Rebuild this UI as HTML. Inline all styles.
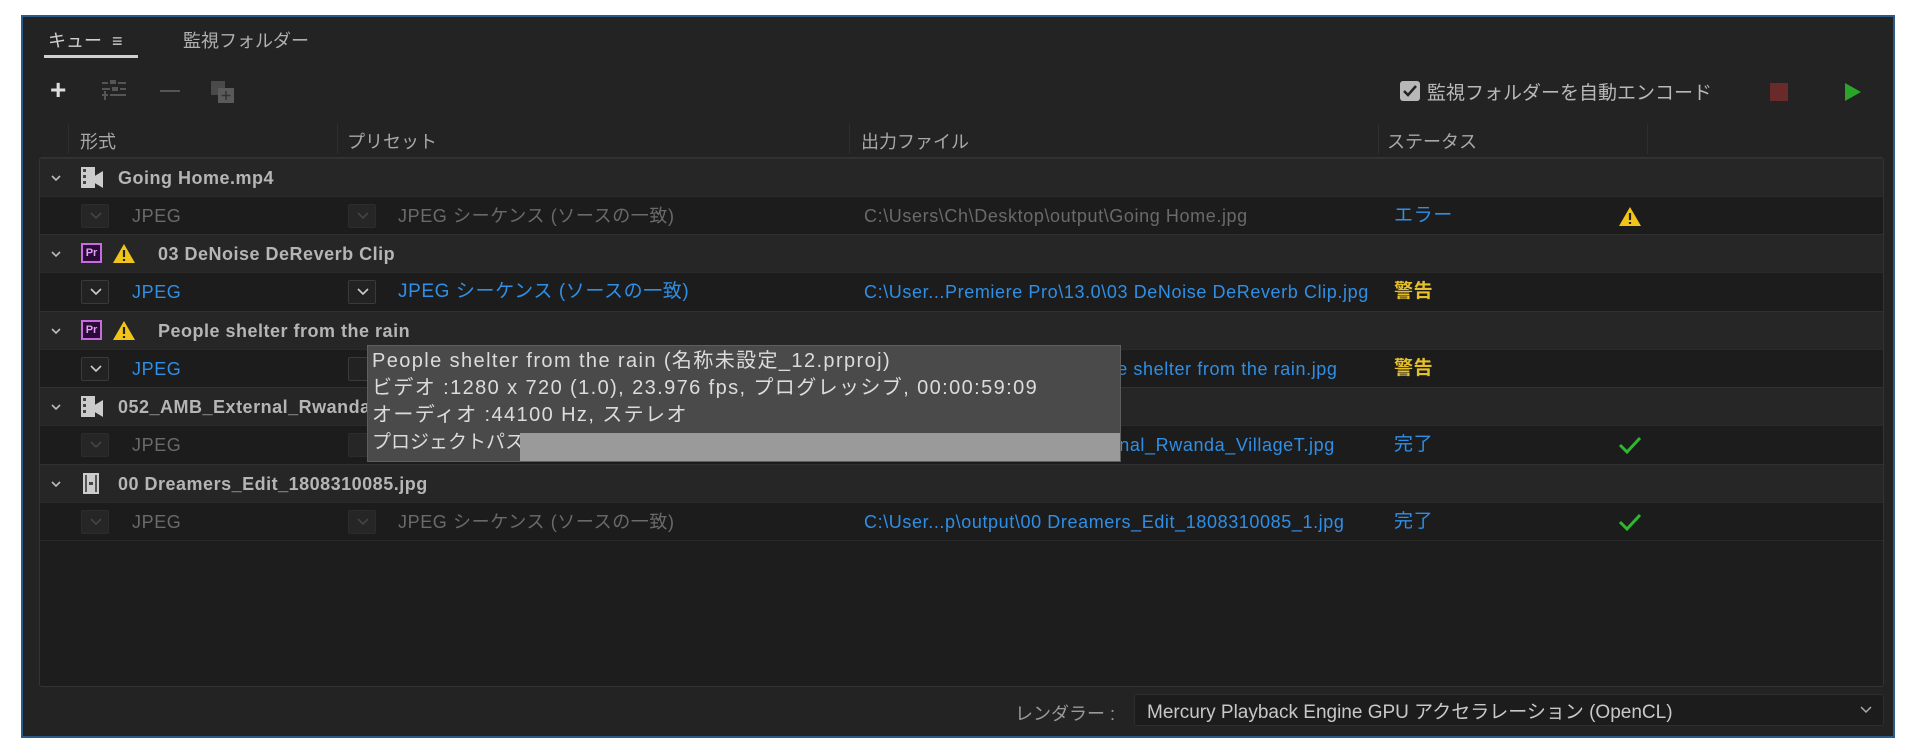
<!DOCTYPE html>
<html><head><meta charset="utf-8"><style>
*{margin:0;padding:0;box-sizing:border-box}
body{width:1920px;height:751px;background:#fff;position:relative;overflow:hidden;font-family:"Liberation Sans","Noto Sans CJK JP",sans-serif;color:#b8b8b8}
.a{position:absolute;white-space:nowrap}
#panel{position:absolute;left:21px;top:15px;width:1874px;height:723px;background:#232323;border:2px solid #2b5a8a}
.tbl{position:absolute;left:39px;top:157px;width:1845px;height:530px;background:#1d1d1d;border:1px solid #333;border-radius:3px;overflow:hidden}
.g{position:absolute;left:0;width:100%;height:38px;background:#262626;border-top:1px solid #303030;font-size:18px;font-weight:bold;color:#b5b5b5;letter-spacing:0.5px}
.r{position:absolute;left:0;width:100%;height:38px;background:#1c1c1c;border-top:1px solid #2a2a2a;font-size:18px;letter-spacing:0.6px}
.chev{position:absolute;left:10px;top:13px;width:12px;height:12px}
.box{position:absolute;top:7px;width:28px;height:24px;border:1px solid #3a3a3a;background:#222;border-radius:2px}
.dim .box{background:#262626;border-color:#2c2c2c}
.t{position:absolute;top:8px;line-height:22px;height:22px}
.blue{color:#2f8fe6}.grey{color:#6a6a6a}.yel{color:#e6c02b;font-weight:bold}
.tt{letter-spacing:1.4px}
</style></head><body>
<div id="panel"></div>
<div class="a" style="left:48px;top:27px;font-size:18px;color:#d0d0d0">キュー&nbsp;&nbsp;≡</div>
<div class="a" style="left:44px;top:55px;width:94px;height:3px;background:#d0d0d0"></div>
<div class="a" style="left:183px;top:27px;font-size:18px;color:#b0b0b0">監視フォルダー</div>
<div class="a" style="left:50px;top:76px;font-size:28px;font-weight:bold;color:#ddd;line-height:28px">+</div>
<svg class="a" style="left:100px;top:79px" width="30" height="24"><g fill="#555"><rect x="10" y="1" width="6" height="4"/><rect x="2" y="3" width="6" height="2"/><rect x="18" y="3" width="8" height="2"/><rect x="2" y="9" width="8" height="2"/><rect x="12" y="8" width="6" height="4"/><rect x="20" y="9" width="6" height="2"/><rect x="10" y="15" width="16" height="2"/><rect x="2" y="15" width="6" height="2"/><rect x="4" y="12" width="2" height="9"/></g></svg>
<div class="a" style="left:160px;top:90px;width:20px;height:2px;background:#555"></div>
<svg class="a" style="left:210px;top:80px" width="26" height="24"><rect x="1" y="1" width="14" height="14" fill="#4a4a4a"/><rect x="8" y="8" width="16" height="15" fill="#5a5a5a"/><path d="M16 11v9M11.5 15.5h9" stroke="#333" stroke-width="1.5"/></svg>
<svg class="a" style="left:1400px;top:81px" width="20" height="20"><rect x="0" y="0" width="20" height="20" rx="3" fill="#b8b8b8"/><path d="M4 10l4 4 8-9" stroke="#222" stroke-width="2.5" fill="none"/></svg>
<div class="a" style="left:1427px;top:78px;font-size:19px;color:#b8b8b8">監視フォルダーを自動エンコード</div>
<div class="a" style="left:1770px;top:83px;width:18px;height:18px;background:#6b2a2a"></div>
<svg class="a" style="left:1843px;top:82px" width="20" height="20"><path d="M2 1L18 10L2 19Z" fill="#2aa52a"/></svg>
<div class="a" style="left:80px;top:128px;font-size:18px;color:#a8a8a8">形式</div>
<div class="a" style="left:347px;top:128px;font-size:18px;color:#a8a8a8">プリセット</div>
<div class="a" style="left:861px;top:128px;font-size:18px;color:#a8a8a8">出力ファイル</div>
<div class="a" style="left:1387px;top:128px;font-size:18px;color:#a8a8a8">ステータス</div>
<div class="a" style="left:68px;top:124px;width:1px;height:30px;background:#2e2e2e"></div>
<div class="a" style="left:337px;top:124px;width:1px;height:30px;background:#2e2e2e"></div>
<div class="a" style="left:849px;top:124px;width:1px;height:30px;background:#2e2e2e"></div>
<div class="a" style="left:1378px;top:124px;width:1px;height:30px;background:#2e2e2e"></div>
<div class="a" style="left:1647px;top:124px;width:1px;height:30px;background:#2e2e2e"></div>

<div class="tbl">
<div class="g" style="top:0"><svg class="chev" viewBox="0 0 12 12"><path d="M2 4l4 4 4-4" stroke="#bbb" stroke-width="1.6" fill="none"/></svg>
<svg class="a" style="left:41px;top:8px" width="22" height="21"><rect x="0" y="0" width="14" height="21" fill="#ccc"/><rect x="2" y="2" width="3" height="3" fill="#444"/><rect x="2" y="8" width="3" height="3" fill="#444"/><rect x="2" y="14" width="3" height="3" fill="#444"/><path d="M12 10l10-6v17l-10-6z" fill="#ccc"/></svg>
<span class="t" style="left:78px">Going Home.mp4</span></div>
<div class="r dim" style="top:38px"><div class="box" style="left:41px"></div><svg class="a" style="left:50px;top:15px" width="12" height="8"><path d="M1 1l5 5 5-5" stroke="#444" stroke-width="1.6" fill="none"/></svg><span class="t grey" style="left:92px">JPEG</span><div class="box" style="left:308px"></div><svg class="a" style="left:317px;top:15px" width="12" height="8"><path d="M1 1l5 5 5-5" stroke="#444" stroke-width="1.6" fill="none"/></svg><span class="t grey" style="left:358px">JPEG シーケンス (ソースの一致)</span><span class="t grey" style="left:824px">C:\Users\Ch\Desktop\output\Going Home.jpg</span><span class="t blue" style="left:1354px;font-size:19px">エラー</span>
<svg class="a" style="left:1578px;top:9px" width="24" height="21"><path d="M12 1L23 20H1Z" fill="#f0c419"/><path d="M12 7v7M12 16v2" stroke="#222" stroke-width="2.2"/></svg></div>
<div class="g" style="top:76px"><svg class="chev" viewBox="0 0 12 12"><path d="M2 4l4 4 4-4" stroke="#bbb" stroke-width="1.6" fill="none"/></svg>
<div class="a" style="left:41px;top:8px;width:21px;height:20px;border:2px solid #c86ae0;background:#2a0a36;color:#e2a0f5;font-size:11px;line-height:16px;text-align:center;letter-spacing:0">Pr</div>
<svg class="a" style="left:72px;top:8px" width="24" height="21"><path d="M12 1L23 20H1Z" fill="#f0c419"/><path d="M12 7v7M12 16v2" stroke="#222" stroke-width="2.2"/></svg>
<span class="t" style="left:118px">03 DeNoise DeReverb Clip</span></div>
<div class="r" style="top:114px"><div class="box" style="left:41px"></div><svg class="a" style="left:50px;top:15px" width="12" height="8"><path d="M1 1l5 5 5-5" stroke="#ccc" stroke-width="1.6" fill="none"/></svg><span class="t blue" style="left:92px">JPEG</span><div class="box" style="left:308px"></div><svg class="a" style="left:317px;top:15px" width="12" height="8"><path d="M1 1l5 5 5-5" stroke="#ccc" stroke-width="1.6" fill="none"/></svg><span class="t blue" style="left:358px;font-size:19px">JPEG シーケンス (ソースの一致)</span><span class="t blue" style="left:824px">C:\User...Premiere Pro\13.0\03 DeNoise DeReverb Clip.jpg</span><span class="t yel" style="left:1354px;font-size:19px">警告</span></div>
<div class="g" style="top:153px"><svg class="chev" viewBox="0 0 12 12"><path d="M2 4l4 4 4-4" stroke="#bbb" stroke-width="1.6" fill="none"/></svg>
<div class="a" style="left:41px;top:8px;width:21px;height:20px;border:2px solid #c86ae0;background:#2a0a36;color:#e2a0f5;font-size:11px;line-height:16px;text-align:center;letter-spacing:0">Pr</div>
<svg class="a" style="left:72px;top:8px" width="24" height="21"><path d="M12 1L23 20H1Z" fill="#f0c419"/><path d="M12 7v7M12 16v2" stroke="#222" stroke-width="2.2"/></svg>
<span class="t" style="left:118px">People shelter from the rain</span></div>
<div class="r" style="top:191px"><div class="box" style="left:41px"></div><svg class="a" style="left:50px;top:15px" width="12" height="8"><path d="M1 1l5 5 5-5" stroke="#ccc" stroke-width="1.6" fill="none"/></svg><span class="t blue" style="left:92px">JPEG</span><div class="box" style="left:308px"></div><span class="t blue" style="left:1062px">ple shelter from the rain.jpg</span><span class="t yel" style="left:1354px;font-size:19px">警告</span></div>
<div class="g" style="top:229px"><svg class="chev" viewBox="0 0 12 12"><path d="M2 4l4 4 4-4" stroke="#bbb" stroke-width="1.6" fill="none"/></svg>
<svg class="a" style="left:41px;top:8px" width="22" height="21"><rect x="0" y="0" width="14" height="21" fill="#ccc"/><rect x="2" y="2" width="3" height="3" fill="#444"/><rect x="2" y="8" width="3" height="3" fill="#444"/><rect x="2" y="14" width="3" height="3" fill="#444"/><path d="M12 10l10-6v17l-10-6z" fill="#ccc"/></svg>
<span class="t" style="left:78px">052_AMB_External_Rwanda_VillageT</span></div>
<div class="r dim" style="top:267px"><div class="box" style="left:41px"></div><svg class="a" style="left:50px;top:15px" width="12" height="8"><path d="M1 1l5 5 5-5" stroke="#444" stroke-width="1.6" fill="none"/></svg><span class="t grey" style="left:92px">JPEG</span><div class="box" style="left:308px"></div><span class="t blue" style="left:1062px">ernal_Rwanda_VillageT.jpg</span><span class="t blue" style="left:1354px;font-size:19px">完了</span>
<svg class="a" style="left:1578px;top:9px" width="24" height="20"><path d="M2 10l7 7L22 3" stroke="#2eb82e" stroke-width="3" fill="none"/></svg></div>
<div class="g" style="top:306px"><svg class="chev" viewBox="0 0 12 12"><path d="M2 4l4 4 4-4" stroke="#bbb" stroke-width="1.6" fill="none"/></svg>
<svg class="a" style="left:43px;top:8px" width="16" height="21"><rect x="0" y="0" width="16" height="21" fill="#ccc"/><rect x="2" y="2" width="2" height="17" fill="#555"/><rect x="12" y="2" width="2" height="17" fill="#555"/><rect x="6" y="9" width="4" height="3" fill="#444"/></svg>
<span class="t" style="left:78px">00 Dreamers_Edit_1808310085.jpg</span></div>
<div class="r dim" style="top:344px"><div class="box" style="left:41px"></div><svg class="a" style="left:50px;top:15px" width="12" height="8"><path d="M1 1l5 5 5-5" stroke="#444" stroke-width="1.6" fill="none"/></svg><span class="t grey" style="left:92px">JPEG</span><div class="box" style="left:308px"></div><svg class="a" style="left:317px;top:15px" width="12" height="8"><path d="M1 1l5 5 5-5" stroke="#444" stroke-width="1.6" fill="none"/></svg><span class="t grey" style="left:358px">JPEG シーケンス (ソースの一致)</span><span class="t blue" style="left:824px">C:\User...p\output\00 Dreamers_Edit_1808310085_1.jpg</span><span class="t blue" style="left:1354px;font-size:19px">完了</span>
<svg class="a" style="left:1578px;top:9px" width="24" height="20"><path d="M2 10l7 7L22 3" stroke="#2eb82e" stroke-width="3" fill="none"/></svg></div>
<div class="a" style="left:0;top:382px;width:100%;height:1px;background:#2a2a2a"></div>
</div>

<div class="a" style="left:367px;top:345px;width:754px;height:117px;background:#4a4a4a;border:1px solid #5e5e5e;font-size:20px;color:#dcdcdc;line-height:27px;padding:2px 4px"><span class="tt">People shelter from the rain (名称未設定_12.prproj)</span><br><span class="tt">ビデオ :1280 x 720 (1.0), 23.976 fps, プログレッシブ, 00:00:59:09</span><br><span class="tt">オーディオ :44100 Hz, ステレオ</span><br><span style="font-size:19px">プロジェクトパス :</span></div>
<div class="a" style="left:520px;top:433px;width:600px;height:28px;background:#9a9a9a"></div>

<div class="a" style="left:1015px;top:700px;font-size:18px;color:#9a9a9a">レンダラー :</div>
<div class="a" style="left:1134px;top:694px;width:750px;height:32px;background:#1c1c1c;border:1px solid #2e2e2e;border-radius:3px"></div>
<div class="a" style="left:1147px;top:697px;font-size:19px;color:#c8c8c8">Mercury Playback Engine GPU アクセラレーション (OpenCL)</div>
<svg class="a" style="left:1860px;top:706px" width="12" height="8"><path d="M1 1l5 5 5-5" stroke="#aaa" stroke-width="1.5" fill="none"/></svg>
</body></html>
